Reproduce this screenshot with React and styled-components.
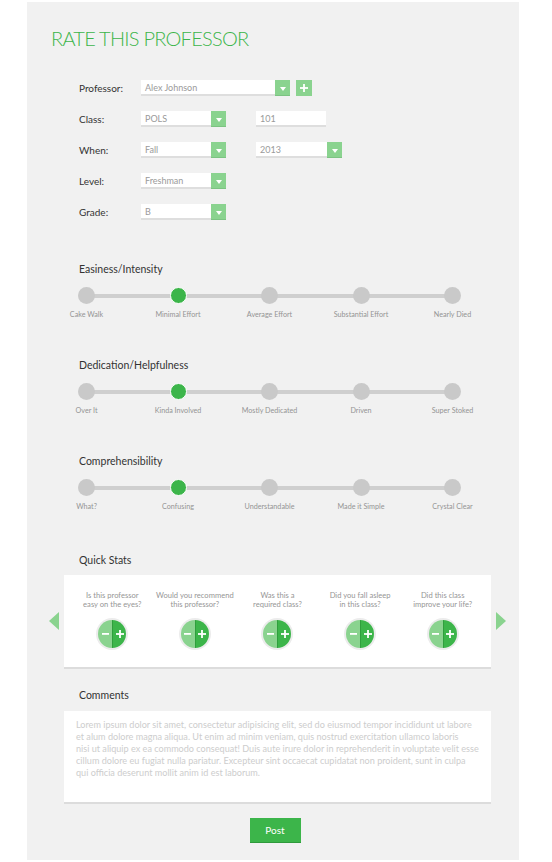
import React from "react";
import styled, { createGlobalStyle } from "styled-components";

const GlobalStyle = createGlobalStyle`
  html, body { margin: 0; padding: 0; background: #ffffff; }
  body { font-family: Lato, "Open Sans", sans-serif; }
  * { box-sizing: border-box; }
`;

const GREEN = "#3cb54a";
const LIGHT_GREEN = "#8ad38f";

const Page = styled.div`
  padding: 2px 0 3px 27px;
`;

const Panel = styled.div`
  width: 492px;
  background: #f1f1f1;
  padding: 24px 0 18px 0;
`;

const Title = styled.h1`
  margin: 0 0 0 24px;
  font-family: Lato, sans-serif;
  font-weight: 300;
  font-size: 20px;
  line-height: 24px;
  color: ${GREEN};
  letter-spacing: -0.75px;
`;

const Form = styled.div`
  margin: 30px 0 0 52px;
  display: flex;
  flex-direction: column;
  gap: 15px;
`;

const Row = styled.div`
  display: flex;
  align-items: center;
  height: 16px;
`;

const Label = styled.div`
  width: 62px;
  font-size: 10px;
  color: #333;
`;

const Select = styled.div`
  display: flex;
  width: ${(p) => p.$w}px;
  height: 16px;
  margin-left: ${(p) => p.$ml || 0}px;
`;

const Field = styled.div`
  height: 16px;
  background: #fff;
  border-bottom: 2px solid #dedede;
  font-size: 9px;
  line-height: 15px;
  color: #9a9a9a;
  padding-left: 4px;
  width: ${(p) => (p.$w ? `${p.$w}px` : "auto")};
  margin-left: ${(p) => p.$ml || 0}px;
  flex: ${(p) => (p.$w ? "none" : "1")};
`;

const ArrowBox = styled.div`
  width: 15px;
  height: 16px;
  background: ${LIGHT_GREEN};
  box-shadow: inset 0 -1px 0 #7cc382;
  display: flex;
  align-items: center;
  justify-content: center;
  &::after {
    content: "";
    border-left: 3.5px solid transparent;
    border-right: 3.5px solid transparent;
    border-top: 4px solid #fff;
    margin-top: 1px;
  }
`;

const AddBtn = styled.div`
  width: 16px;
  height: 16px;
  margin-left: 6px;
  background: ${LIGHT_GREEN};
  display: flex;
  align-items: center;
  justify-content: center;
`;

const Section = styled.div`
  margin: ${(p) => p.$mt}px 0 0 52px;
`;

const Heading = styled.div`
  font-size: 10.5px;
  line-height: 14px;
  color: #333;
`;

const Stops = styled.div`
  margin: 11px 0 0 -1px;
  width: 383px;
  display: flex;
  justify-content: space-between;
  background: linear-gradient(#cfcfcf, #cfcfcf) no-repeat 8px 6.5px / 367px 4px;
`;

const Stop = styled.div`
  width: 17px;
  display: flex;
  flex-direction: column;
  align-items: center;
`;

const Dot = styled.div`
  width: 17px;
  height: 17px;
  border-radius: 50%;
  background: ${(p) => (p.$active ? GREEN : "#c9c9c9")};
  border: ${(p) => (p.$active ? "1px solid #fff" : "none")};
`;

const StopLabel = styled.div`
  margin-top: 6px;
  font-size: 7.2px;
  line-height: 10px;
  color: #949494;
  white-space: nowrap;
`;

const StatsRow = styled.div`
  margin: 8px 0 0 22px;
  display: flex;
  align-items: center;
  gap: 5px;
`;

const Tri = styled.div`
  width: 0;
  height: 0;
  border-top: 9.5px solid transparent;
  border-bottom: 9.5px solid transparent;
  ${(p) =>
    p.$dir === "left"
      ? `border-right: 10px solid ${LIGHT_GREEN};`
      : `border-left: 10px solid ${LIGHT_GREEN};`}
`;

const Card = styled.div`
  width: 427px;
  height: ${(p) => p.$h}px;
  background: #fff;
  box-shadow: 0 2px 0 #dcdcdc;
`;

const StatsGrid = styled.div`
  display: grid;
  grid-template-columns: repeat(5, 1fr);
  padding: 16px 7px 0;
`;

const Stat = styled.div`
  display: flex;
  flex-direction: column;
  align-items: center;
`;

const Question = styled.div`
  font-size: 7.6px;
  line-height: 9px;
  color: #969696;
  text-align: center;
  white-space: nowrap;
  height: 18px;
`;

const Toggle = styled.div`
  margin-top: 9px;
  width: 32px;
  height: 32px;
  border-radius: 50%;
  background: #ececec;
  padding: 2px;
`;

const ToggleInner = styled.div`
  width: 28px;
  height: 28px;
  border-radius: 50%;
  display: flex;
  overflow: hidden;
  background: linear-gradient(
    90deg,
    ${LIGHT_GREEN} 0 14px,
    #2f9f3d 14px 15px,
    ${GREEN} 15px
  );
`;

const Half = styled.div`
  width: 14px;
  height: 28px;
  display: flex;
  align-items: center;
  justify-content: center;
  padding-left: ${(p) => p.$pl || 0}px;
`;

const CommentsCard = styled(Card)`
  margin: 9px 0 0 37px;
  padding: 8px 0 0 12px;
  overflow: hidden;
`;

const Lorem = styled.p`
  margin: 0;
  font-size: 9.1px;
  line-height: 12px;
  color: #cdcdcd;
  white-space: nowrap;
`;

const PostWrap = styled.div`
  display: flex;
  justify-content: center;
  margin-top: 16px;
  padding-left: 4px;
`;

const PostButton = styled.button`
  width: 51px;
  height: 24px;
  border: none;
  background: ${GREEN};
  box-shadow: 0 1px 0 #2f9a3c;
  color: #fff;
  font-family: Lato, sans-serif;
  font-size: 10px;
  padding: 0;
`;

const Minus = () => (
  <svg width="7" height="8" viewBox="0 0 7 8">
    <rect x="0" y="3" width="7" height="1.8" fill="#fff" />
  </svg>
);

const Plus = ({ size = 8 }) => (
  <svg width={size} height={size} viewBox="0 0 8 8">
    <rect x="0" y="3.1" width="8" height="1.8" fill="#fff" />
    <rect x="3.1" y="0" width="1.8" height="8" fill="#fff" />
  </svg>
);

const scales = [
  {
    title: "Easiness/Intensity",
    labels: ["Cake Walk", "Minimal Effort", "Average Effort", "Substantial Effort", "Nearly Died"],
  },
  {
    title: "Dedication/Helpfulness",
    labels: ["Over It", "Kinda Involved", "Mostly Dedicated", "Driven", "Super Stoked"],
  },
  {
    title: "Comprehensibility",
    labels: ["What?", "Confusing", "Understandable", "Made it Simple", "Crystal Clear"],
  },
];

const questions = [
  ["Is this professor", "easy on the eyes?"],
  ["Would you recommend", "this professor?"],
  ["Was this a", "required class?"],
  ["Did you fall asleep", "in this class?"],
  ["Did this class", "improve your life?"],
];

const loremLines = [
  "Lorem ipsum dolor sit amet, consectetur adipisicing elit, sed do eiusmod tempor incididunt ut labore",
  "et alum dolore magna aliqua. Ut enim ad minim veniam, quis nostrud exercitation ullamco laboris",
  "nisi ut aliquip ex ea commodo consequat! Duis aute irure dolor in reprehenderit in voluptate velit esse",
  "cillum dolore eu fugiat nulla pariatur. Excepteur sint occaecat cupidatat non proident, sunt in culpa",
  "qui officia deserunt mollit anim id est laborum.",
];

export default function App() {
  return (
    <Page>
      <GlobalStyle />
      <Panel>
        <Title>RATE THIS PROFESSOR</Title>
        <Form>
          <Row>
            <Label>Professor:</Label>
            <Select $w={149}>
              <Field>Alex Johnson</Field>
              <ArrowBox />
            </Select>
            <AddBtn>
              <Plus />
            </AddBtn>
          </Row>
          <Row>
            <Label>Class:</Label>
            <Select $w={85}>
              <Field>POLS</Field>
              <ArrowBox />
            </Select>
            <Field $w={70} $ml={30}>
              101
            </Field>
          </Row>
          <Row>
            <Label>When:</Label>
            <Select $w={85}>
              <Field>Fall</Field>
              <ArrowBox />
            </Select>
            <Select $w={86} $ml={30}>
              <Field>2013</Field>
              <ArrowBox />
            </Select>
          </Row>
          <Row>
            <Label>Level:</Label>
            <Select $w={85}>
              <Field>Freshman</Field>
              <ArrowBox />
            </Select>
          </Row>
          <Row>
            <Label>Grade:</Label>
            <Select $w={85}>
              <Field>B</Field>
              <ArrowBox />
            </Select>
          </Row>
        </Form>

        {scales.map((s, i) => (
          <Section key={s.title} $mt={i === 0 ? 42 : 38}>
            <Heading>{s.title}</Heading>
            <Stops>
              {s.labels.map((l, j) => (
                <Stop key={l}>
                  <Dot $active={j === 1} />
                  <StopLabel>{l}</StopLabel>
                </Stop>
              ))}
            </Stops>
          </Section>
        ))}

        <Section $mt={41}>
          <Heading>Quick Stats</Heading>
        </Section>
        <StatsRow>
          <Tri $dir="left" />
          <Card $h={92}>
            <StatsGrid>
              {questions.map((q) => (
                <Stat key={q[0]}>
                  <Question>
                    {q[0]}
                    <br />
                    {q[1]}
                  </Question>
                  <Toggle>
                    <ToggleInner>
                      <Half>
                        <Minus />
                      </Half>
                      <Half $pl={1}>
                        <Plus />
                      </Half>
                    </ToggleInner>
                  </Toggle>
                </Stat>
              ))}
            </StatsGrid>
          </Card>
          <Tri $dir="right" />
        </StatsRow>

        <Section $mt={21}>
          <Heading>Comments</Heading>
        </Section>
        <CommentsCard $h={91}>
          <Lorem>
            {loremLines.map((l, i) => (
              <React.Fragment key={i}>
                {l}
                {i < loremLines.length - 1 && <br />}
              </React.Fragment>
            ))}
          </Lorem>
        </CommentsCard>

        <PostWrap>
          <PostButton>Post</PostButton>
        </PostWrap>
      </Panel>
    </Page>
  );
}
